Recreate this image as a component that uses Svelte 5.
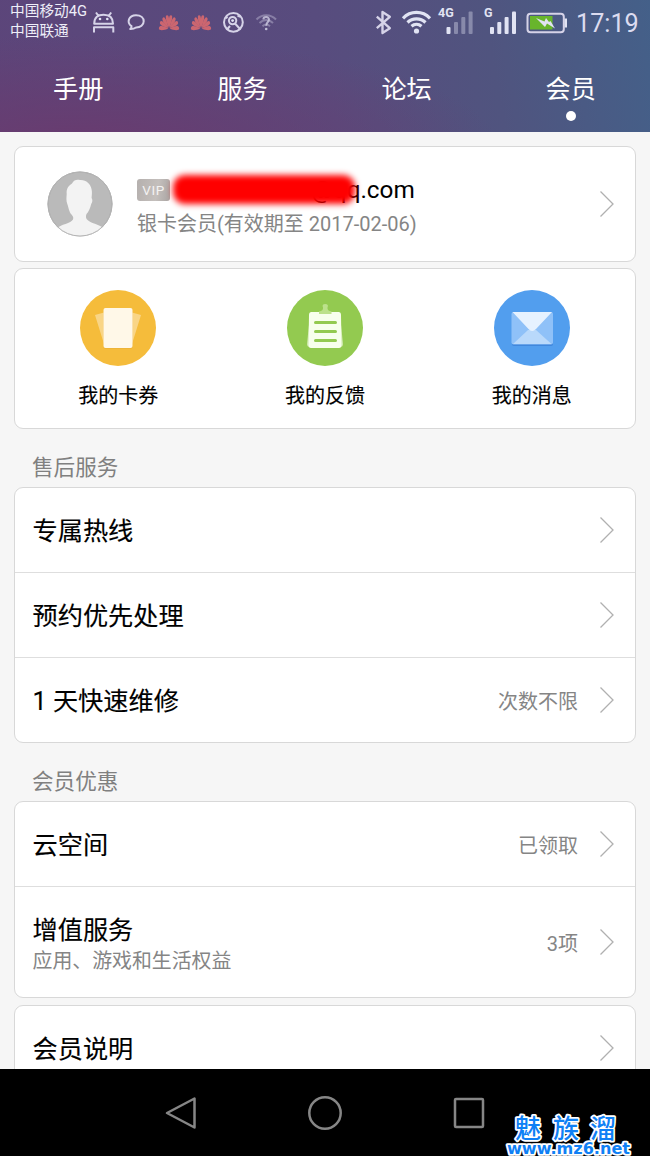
<script>
  const tabs = ['手册', '服务', '论坛', '会员'];
  let activeTab = $state('会员');

  const shortcuts = [
    { icon: 'cards', label: '我的卡券' },
    { icon: 'feedback', label: '我的反馈' },
    { icon: 'message', label: '我的消息' },
  ];

  const sections = [
    {
      title: '售后服务',
      rows: [
        { name: '专属热线' },
        { name: '预约优先处理' },
        { name: '1 天快速维修', value: '次数不限' },
      ],
    },
    {
      title: '会员优惠',
      rows: [
        { name: '云空间', value: '已领取' },
        { name: '增值服务', note: '应用、游戏和生活权益', value: '3项' },
      ],
    },
    {
      rows: [{ name: '会员说明' }],
    },
  ];

  const petals = [-88, -62, -37, -12, 12, 37, 62, 88];
</script>

{#snippet chevron()}
  <svg class="chevron" width="16" height="28" viewBox="0 0 16 28">
    <path d="M1.5 1.5 14 14 1.5 26.5" />
  </svg>
{/snippet}

{#snippet huawei()}
  <svg width="32" height="46" viewBox="0 0 32 46">
    <g transform="translate(16 28.5) scale(0.78 1.05)">
      {#each petals as angle}
        <path
          class="petal"
          d="M0 -1C-1.400 -4.500 -2.600 -9.500 -1.600 -12C-1 -13.300 1 -13.300 1.600 -12C2.600 -9.500 1.400 -4.500 0 -1Z"
          transform="rotate({angle})"
        />
      {/each}
    </g>
  </svg>
{/snippet}

<div class="screen">
  <header>
    <div class="status">
      <div class="carriers">
        <span>中国移动4G</span>
        <span>中国联通</span>
      </div>
      <div class="notifications">
        <svg width="30" height="46" viewBox="89 0 30 46">
          <path class="line" d="M94.200 23.700C94.200 17 98 14.700 103.600 14.700S113 17 113 23.700ZM98.200 15.500 96 12.500M109 15.500l2.200-3M94 32.500v-5.300h19.300v5.300" />
          <circle class="solid" cx="100" cy="19" r="1.300" />
          <circle class="solid" cx="107.300" cy="19" r="1.300" />
        </svg>
        <svg width="34" height="46" viewBox="119 0 34 46">
          <path class="line" d="M131.500 26.200C126.300 22.800 128.500 15.200 136 15.200C141 15.200 143.700 18 143.700 21.300C143.700 25 140.500 27.600 136 27.500C134.300 28.800 132.400 29.200 130.200 29.100C131.400 28.300 131.700 27.400 131.500 26.200Z" />
        </svg>
        {@render huawei()}
        {@render huawei()}
        <svg width="33" height="46" viewBox="217 0 33 46">
          <circle class="line" cx="233.400" cy="22.300" r="9.400" />
          <path class="line" d="M235 23.500l5.500 6M230 26l-3 3.500M237.500 15.500l2.500 1.500M226 18.500l1.500-2" />
          <circle class="line" cx="232.600" cy="20.600" r="3.700" />
          <circle class="solid" cx="232.600" cy="20.600" r="1.400" />
        </svg>
        <svg width="34" height="46" viewBox="250 0 34 46">
          <g class="dim">
            <path class="line" d="M256.500 19.500C262 13.800 270.500 13.800 276 19.500M259.500 23C263.500 19 269 19 273 23M262.500 26.200C265 24 267.500 24 270 26.200" />
          </g>
          <path class="line question" d="M263.400 19.400C263.500 16.300 269.100 16.300 269 19.600C268.800 22 266.200 22.300 266.200 25.800" />
          <circle class="solid question" cx="266.200" cy="29" r="1.300" />
        </svg>
      </div>
      <div class="system">
        <svg width="26" height="46" viewBox="371 0 26 46">
          <path class="line thick" d="M376.800 16.700 389.800 28.200 382.500 33V12L389.800 16.800 376.800 28.200" />
        </svg>
        <svg width="37" height="46" viewBox="397 0 37 46">
          <path class="line arc" d="M403 18.300C410.500 10.500 422.500 10.500 430 18.300M407.500 22.500C412.500 17.600 420.500 17.600 425.500 22.500M411.500 26.200C414.500 23.600 418.500 23.600 421.500 26.200" />
          <circle class="solid" cx="416.500" cy="31" r="2.600" />
        </svg>
        <svg width="46" height="46" viewBox="434 0 46 46">
          <text class="net" x="438" y="17">4G</text>
          <rect class="solid" x="446.500" y="27" width="4" height="7" rx="1" />
          <g class="dim">
            <rect class="solid" x="454" y="22" width="4" height="12" rx="1" />
            <rect class="solid" x="461.300" y="17" width="4" height="17" rx="1" />
            <rect class="solid" x="468.600" y="11.500" width="4" height="22.500" rx="1" />
          </g>
        </svg>
        <svg width="42" height="46" viewBox="480 0 42 46">
          <text class="net" x="484" y="17">G</text>
          <rect class="solid" x="490" y="27" width="4" height="7" rx="1" />
          <rect class="solid" x="497.300" y="22" width="4" height="12" rx="1" />
          <rect class="solid" x="504.600" y="17" width="4" height="17" rx="1" />
          <rect class="solid" x="512" y="11.500" width="4" height="22.500" rx="1" />
        </svg>
        <svg width="48" height="46" viewBox="522 0 48 46">
          <rect class="line" x="527.500" y="13.700" width="36.300" height="18.500" rx="3" />
          <path class="solid" d="M564.500 18.500h2.500v9h-2.500z" />
          <rect x="530" y="16" width="22.500" height="13.500" fill="#68b52c" />
          <path class="solid" d="M536 18l8.500 3.500 1.500-3.500 3 4 1.500-1 4.500 7.500-8-5-2 3.500z" />
        </svg>
        <span class="clock">17:19</span>
      </div>
    </div>
    <nav class="tabs">
      {#each tabs as tab}
        <button class="tab" class:active={tab === activeTab} onclick={() => (activeTab = tab)}>{tab}</button>
      {/each}
    </nav>
  </header>

  <main>
    <div class="card profile">
      <svg class="avatar" width="66" height="66" viewBox="0 0 66 66">
        <defs>
          <clipPath id="face"><circle cx="33" cy="33" r="32.500" /></clipPath>
        </defs>
        <circle cx="33" cy="33" r="32" fill="#bababa" stroke="#aaa" />
        <path
          clip-path="url(#face)"
          fill="#f3f3f3"
          d="M9 58C14 53 24 52.500 26 48.500C26.800 46.500 25.800 45 24.500 43.500C22 41 21.500 36 20.300 33C19 30 19.500 26 19.700 23C19 17 22.500 14 25 12.500C27 8.500 30 8.300 33 9C39 8.500 43.500 13 44.500 18C45.300 21 44.800 24 44.600 27C45.800 29 45.500 31 44.200 33C43.300 37 41.500 41 39.500 43C38.700 45 38.700 47 40 48.500C43.500 52.500 52 53 57 57.500L57 66H9Z"
        />
        <circle cx="33" cy="33" r="32" fill="none" stroke="#b4b4b4" />
      </svg>
      <div class="info">
        <div class="account">
          <span class="vip">VIP</span>
          <span class="mail">@qq.com<i class="smear"></i></span>
        </div>
        <div class="level">银卡会员(有效期至 2017-02-06)</div>
      </div>
      {@render chevron()}
    </div>

    <div class="card shortcuts">
      {#each shortcuts as item}
        <div class="shortcut">
          <svg width="76" height="76" viewBox="0 0 76 76">
            {#if item.icon === 'cards'}
              <circle cx="38" cy="38" r="38" fill="#f5bc3b" />
              <path d="M15 25 24 22.500V54zM61 25 52 22.500V54z" fill="#f9d586" />
              <rect x="23.500" y="19" width="29" height="40" rx="2" fill="#e7ab31" opacity=".5" />
              <rect x="23.500" y="18" width="29" height="40" rx="2" fill="#fff8e8" />
            {:else if item.icon === 'feedback'}
              <circle cx="38" cy="38" r="38" fill="#93ca50" />
              <path d="M22.500 30 20 54Q20 57 23 57H53Q56 57 56 54L53.500 30z" fill="#cee9ac" />
              <path d="M24.500 22H51.500Q54 22 54 25L54.500 55Q54.500 58 52 58H24Q21.500 58 21.500 55L22 25Q22 22 24.500 22Z" fill="#f7ffec" />
              <path d="M28.500 32.500H48.500M28.500 41.500H48.500M28.500 50.500H48.500" stroke="#93ca50" stroke-width="3" stroke-linecap="round" />
              <path d="M32 24V21.500Q36.500 21 36 17.500Q34.500 14 38.200 14Q42 14 40.500 17.500Q40 21 44.500 21.500V24Z" fill="#bce18b" />
            {:else}
              <circle cx="38" cy="38" r="38" fill="#529eee" />
              <rect x="18" y="23.500" width="41" height="32.500" rx="2" fill="#4087dc" />
              <rect x="17.500" y="22" width="41.500" height="32.500" rx="2" fill="#8fc1f8" />
              <path d="M19 54 34 40H42L57.500 54z" fill="#b9d9fb" />
              <path d="M18.500 22H58L42 39Q38 43 34.500 39Z" fill="#e6f2ff" />
            {/if}
          </svg>
          <span>{item.label}</span>
        </div>
      {/each}
    </div>

    {#each sections as section}
      {#if section.title}
        <h2>{section.title}</h2>
      {/if}
      <div class="card list">
        {#each section.rows as row}
          <div class="row" class:tall={row.note}>
            <div class="label">
              <div class="name">{row.name}</div>
              {#if row.note}
                <div class="note">{row.note}</div>
              {/if}
            </div>
            {#if row.value}
              <span class="value">{row.value}</span>
            {/if}
            {@render chevron()}
          </div>
        {/each}
      </div>
    {/each}
  </main>

  <footer>
    <svg width="36" height="40" viewBox="0 0 36 40">
      <path class="key" d="M31.500 5.500V34.500L4 20Z" />
    </svg>
    <svg width="36" height="40" viewBox="0 0 36 40">
      <circle class="key" cx="18" cy="20" r="15.700" />
    </svg>
    <svg width="36" height="40" viewBox="0 0 36 40">
      <rect class="key" x="4" y="6" width="28" height="28" rx="1" />
    </svg>
    <svg class="watermark" width="136" height="46" viewBox="0 0 136 46">
      <text class="site" y="28"><tspan x="12">魅</tspan><tspan x="50">族</tspan><tspan x="87">溜</tspan></text>
      <text class="url" x="4" y="44" textLength="123" lengthAdjust="spacingAndGlyphs">www.mz6.net</text>
    </svg>
  </footer>
</div>

<style>
  :global(body) {
    margin: 0;
    overflow: hidden;
  }

  .screen {
    display: flex;
    flex-direction: column;
    width: 650px;
    height: 1156px;
    overflow: hidden;
    background: #f6f6f6;
    color: #000;
    font-family: Roboto, "Noto Sans CJK SC", sans-serif;
  }

  header {
    flex: none;
    height: 132px;
    background:
      radial-gradient(ellipse 420px 110px at 12% 110%, #693b6f 0%, rgba(105, 59, 111, 0) 100%),
      linear-gradient(80deg, #5c457a 0%, #584c7e 50%, #50547f 75%, #446089 100%);
    color: #fff;
  }

  .status {
    display: flex;
    height: 46px;
    color: #dcdcf0;
  }

  .status svg {
    display: block;
    flex: none;
  }

  .carriers {
    display: flex;
    flex-direction: column;
    width: 79px;
    padding: 1px 0 0 10px;
    font-size: 14.7px;
    line-height: 20px;
    white-space: nowrap;
    color: #eeeef8;
  }

  .notifications,
  .system {
    display: flex;
  }

  .system {
    margin-left: auto;
    padding-right: 10px;
  }

  .line {
    fill: none;
    stroke: #d6d3e8;
    stroke-width: 2;
    stroke-linejoin: round;
  }

  .thick {
    stroke-width: 2.4;
  }

  .arc {
    stroke: #e1e3f3;
    stroke-width: 3.2;
  }

  .solid {
    fill: #e1e3f3;
  }

  .question {
    opacity: 0.75;
  }

  .dim {
    opacity: 0.38;
  }

  .petal {
    fill: #cc6670;
  }

  .net {
    fill: #e1e3f3;
    font-size: 12.5px;
    font-weight: 700;
  }

  .clock {
    width: 70px;
    padding-left: 6px;
    box-sizing: border-box;
    font-size: 25.2px;
    line-height: 48px;
  }

  .tabs {
    display: flex;
    justify-content: space-between;
    padding: 0 54px 0 53px;
  }

  .tab {
    display: flex;
    flex-direction: column;
    align-items: center;
    height: 86px;
    padding: 24px 0 0;
    border: none;
    background: none;
    color: #fff;
    font: inherit;
    font-size: 25.2px;
    line-height: 40px;
  }

  .active::after {
    content: "";
    width: 10px;
    height: 10px;
    margin-top: 1px;
    border-radius: 50%;
    background: #fff;
  }

  main {
    flex: 1;
    min-height: 0;
    overflow: hidden;
    padding: 14px 14px 0;
  }

  .card {
    box-sizing: border-box;
    border: 1px solid #d8d8d8;
    border-radius: 9px;
    background: #fff;
  }

  .chevron {
    flex: none;
    margin-right: 20px;
  }

  .chevron path {
    fill: none;
    stroke: #b0b0b0;
    stroke-width: 1.3;
  }

  .profile {
    display: flex;
    align-items: center;
    height: 116px;
    padding-left: 32px;
  }

  .avatar {
    flex: none;
  }

  .info {
    flex: 1;
    margin-left: 24px;
    padding-top: 6px;
  }

  .account {
    display: flex;
    align-items: center;
    height: 34px;
  }

  .vip {
    width: 33px;
    height: 22px;
    border-radius: 3px;
    background: linear-gradient(100deg, #b5b0ae, #c4bfbc 60%, #a9a4a2);
    color: #f4f2f1;
    font-size: 13.5px;
    line-height: 23px;
    letter-spacing: 0.6px;
    text-align: center;
  }

  .mail {
    position: relative;
    margin-left: 3px;
    padding-left: 138px;
    font-size: 24.3px;
    line-height: 36px;
  }

  .smear {
    position: absolute;
    left: 0;
    top: 3px;
    width: 182px;
    height: 29px;
    border-radius: 12px;
    background: #f00;
    filter: blur(3px);
  }

  .level {
    font-size: 20px;
    line-height: 34px;
    color: #858585;
  }

  .shortcuts {
    display: grid;
    grid-template-columns: repeat(3, 1fr);
    height: 161px;
    margin-top: 6px;
    padding-top: 21px;
  }

  .shortcut {
    display: flex;
    flex-direction: column;
    align-items: center;
    font-size: 20px;
    line-height: 30px;
    -webkit-text-stroke: 0.15px;
  }

  .shortcut span {
    margin-top: 15px;
  }

  h2 {
    height: 58px;
    margin: 0;
    padding-left: 18px;
    font-size: 21.6px;
    font-weight: 400;
    line-height: 77px;
    color: #808080;
  }

  .list + .list {
    margin-top: 7px;
  }

  .row {
    display: flex;
    align-items: center;
    box-sizing: border-box;
    height: 84px;
    padding-left: 17.5px;
  }

  .row + .row {
    height: 85px;
    border-top: 1px solid #dedede;
  }

  .row + .tall {
    height: 111px;
  }

  .label {
    flex: 1;
    padding-top: 4px;
  }

  .name {
    font-size: 25.2px;
    line-height: 36px;
    -webkit-text-stroke: 0.15px;
  }

  .note {
    font-size: 19.9px;
    line-height: 26px;
    color: #858585;
  }

  .value {
    margin-right: 21px;
    font-size: 20px;
    color: #858585;
  }

  footer {
    position: relative;
    display: flex;
    flex: none;
    justify-content: center;
    gap: 108px;
    height: 87px;
    padding-top: 24px;
    box-sizing: border-box;
    background: #000;
  }

  .key {
    fill: none;
    stroke: #868686;
    stroke-width: 2.5;
    stroke-linejoin: round;
  }

  .watermark {
    position: absolute;
    right: 11px;
    bottom: 0;
  }

  .site,
  .url {
    fill: #0f80f5;
    stroke: #fff;
    stroke-width: 3.5px;
    stroke-linejoin: round;
    paint-order: stroke;
    font-weight: 700;
  }

  .site {
    font-size: 26px;
    font-weight: 500;
  }

  .url {
    font-family: "DejaVu Sans", sans-serif;
    font-size: 15px;
  }
</style>
